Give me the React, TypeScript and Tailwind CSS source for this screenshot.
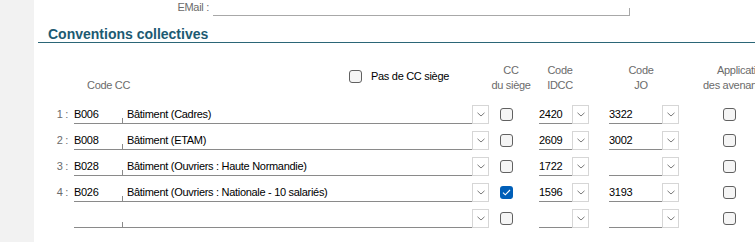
import React from "react";

type Row = {
  n?: number;
  code: string;
  label: string;
  siege: boolean;
  idcc: string;
  jo: string;
};

const rows: Row[] = [
  { n: 1, code: "B006", label: "Bâtiment (Cadres)", siege: false, idcc: "2420", jo: "3322" },
  { n: 2, code: "B008", label: "Bâtiment (ETAM)", siege: false, idcc: "2609", jo: "3002" },
  { n: 3, code: "B028", label: "Bâtiment (Ouvriers : Haute Normandie)", siege: false, idcc: "1722", jo: "" },
  { n: 4, code: "B026", label: "Bâtiment (Ouvriers : Nationale - 10 salariés)", siege: true, idcc: "1596", jo: "3193" },
  { code: "", label: "", siege: false, idcc: "", jo: "" },
];

const Check = ({ checked = false, className = "" }: { checked?: boolean; className?: string }) =>
  checked ? (
    <span
      className={`flex h-[13px] w-[13px] shrink-0 items-center justify-center rounded-[3px] bg-[#005fb8] ${className}`}
    >
      <svg width="9" height="7" viewBox="0 0 9 7" fill="none">
        <path d="M1 3.6 L3.3 5.8 L8 1" stroke="white" strokeWidth="1.1" />
      </svg>
    </span>
  ) : (
    <span
      className={`block h-[13px] w-[13px] shrink-0 rounded-[3px] border border-[#616161] bg-[#f5f5f5] ${className}`}
    />
  );

const Drop = () => (
  <div className="flex h-[19px] w-[17px] shrink-0 items-center justify-center border border-[#d6d6d6] bg-white">
    <svg width="8" height="5" viewBox="0 0 8 5" fill="none">
      <path d="M0.5 0.8 L4 4 L7.5 0.8" stroke="#7a7a7a" strokeWidth="1" />
    </svg>
  </div>
);

const line = "shrink-0 border-b border-[#8a8a8a]";

const App = () => {
  return (
    <div className="flex h-[242px] w-[755px] overflow-hidden bg-white font-['Liberation_Sans',Arial,sans-serif] text-[11px] tracking-[-0.3px] text-black">
      <div className="w-[34px] shrink-0 bg-[#f2f2f2]" />
      <div className="flex min-w-0 flex-1 flex-col overflow-hidden">
        {/* email */}
        <div className="flex h-[16px] shrink-0 items-end">
          <div className="w-[175px] shrink-0 self-start text-right leading-[14px] text-[#6b6b6b]">EMail :</div>
          <div className="ml-[4px] flex h-full w-[417px] shrink-0 items-end">
            <div className="h-full flex-1 border-b border-[#a8a8a8]" />
            <div className="h-[8px] w-px bg-[#a8a8a8]" />
          </div>
        </div>

        {/* section title */}
        <div className="ml-[4px] mt-[11px] h-[16px] shrink-0 border-b border-[#2b6677] pl-[10px] text-[14px] font-bold leading-[15px] tracking-normal text-[#1d5a72]">
          Conventions collectives
        </div>

        {/* column headers */}
        <div className="flex h-[61px] shrink-0 items-start whitespace-nowrap leading-[15px] text-[#6b6b6b]">
          <div className="ml-[53px] mt-[35px] w-[262px] shrink-0">Code CC</div>
          <div className="mt-[26px] flex w-[142px] shrink-0 items-center text-black">
            <Check />
            <span className="ml-[9px]">Pas de CC siège</span>
          </div>
          <div className="mt-[20px] w-[40px] shrink-0 text-center">
            CC
            <br />
            du siège
          </div>
          <div className="ml-[9px] mt-[20px] w-[40px] shrink-0 text-center">
            Code
            <br />
            IDCC
          </div>
          <div className="ml-[41px] mt-[20px] w-[40px] shrink-0 text-center">
            Code
            <br />
            JO
          </div>
          <div className="ml-[42px] mt-[20px] w-[80px] shrink-0">
            <div className="pl-[14px]">Application</div>
            <div>des avenants</div>
          </div>
        </div>

        {/* rows */}
        {rows.map((r, i) => (
          <div key={i} className="flex h-[26px] shrink-0 items-start pt-[1px] leading-[18px]">
            <div className="w-[40px] shrink-0 pr-[6px] text-right text-[#6b6b6b]">{r.n ? `${r.n} :` : ""}</div>
            <div className="flex h-[19px] shrink-0 items-end">
              <div className={`h-full w-[48px] ${line}`}>{r.code}</div>
              <div className="h-[6px] w-px shrink-0 bg-[#8a8a8a]" />
              <div className={`h-full w-[349px] whitespace-nowrap pl-[4px] ${line}`}>{r.label}</div>
            </div>
            <Drop />
            <Check checked={r.siege} className="ml-[11px] mt-[3px]" />
            <div className={`ml-[26px] h-[19px] w-[33px] ${line}`}>{r.idcc}</div>
            <Drop />
            <div className={`ml-[20px] h-[19px] w-[53px] ${line}`}>{r.jo}</div>
            <Drop />
            <Check className="ml-[44px] mt-[3px]" />
          </div>
        ))}
      </div>
    </div>
  );
};

export default App;
